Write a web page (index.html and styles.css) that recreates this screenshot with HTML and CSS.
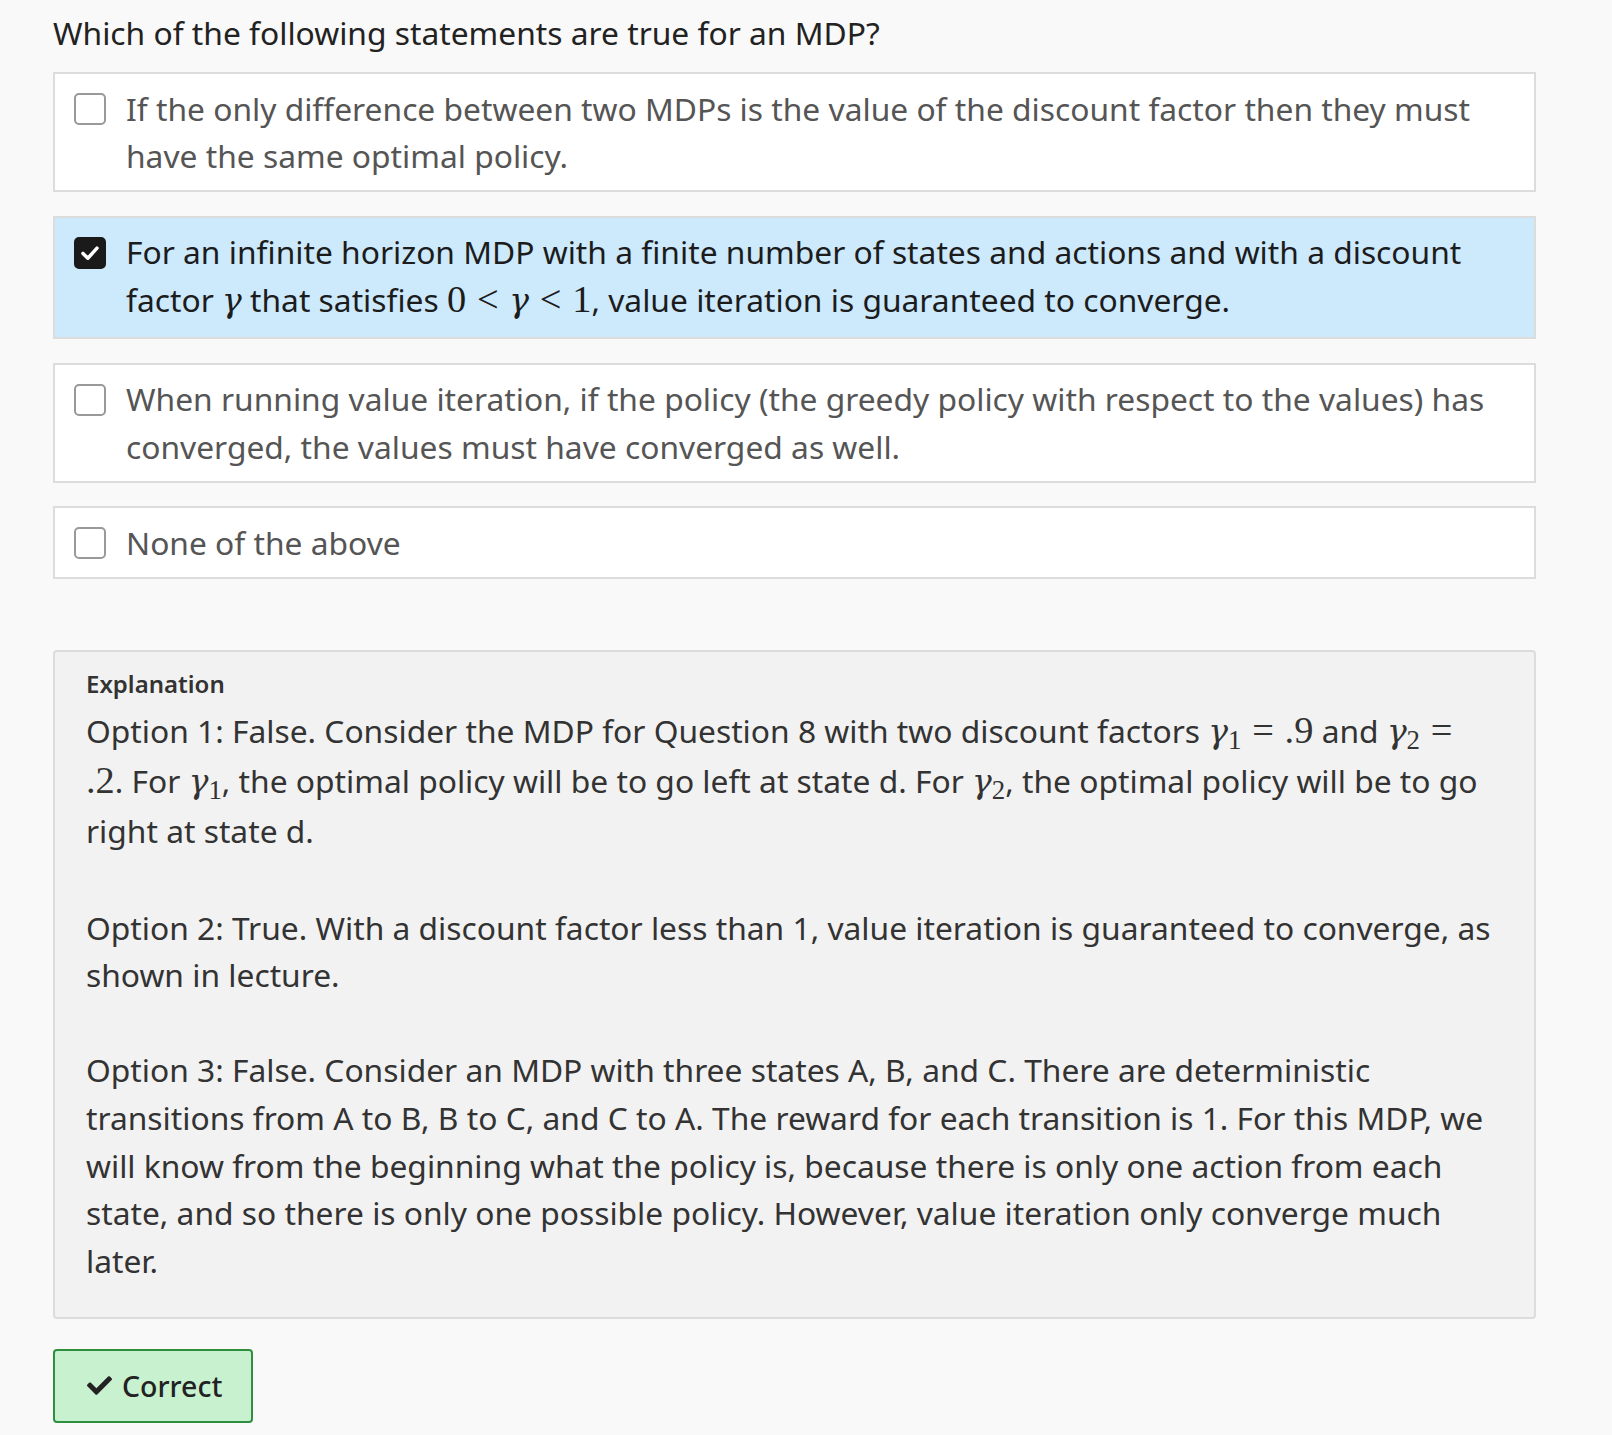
FILE: index.html
```html
<!DOCTYPE html>
<html lang="en">
<head>
<meta charset="utf-8">
<title>MDP Question</title>
<link rel="stylesheet" href="styles.css">
</head>
<body>
<div class="page">
  <div class="question">Which of the following statements are true for an MDP?</div>
  <div class="options">
    <div class="option">
      <span class="box"></span>
      <span class="label">If the only difference between two MDPs is the value of the discount factor then they must have the same optimal policy.</span>
    </div>
    <div class="option selected">
      <span class="box checked"><svg viewBox="0 0 32 32" width="32" height="32"><path d="M8 16.5 L13.5 22 L24 10.5" fill="none" stroke="#fff" stroke-width="4" stroke-linecap="round" stroke-linejoin="round"/></svg></span>
      <span class="label">For an infinite horizon MDP with a finite number of states and actions and with a discount factor <span class="m"><i>γ</i></span> that satisfies <span class="m">0<span class="op">&lt;</span><i>γ</i><span class="op">&lt;</span>1</span>, value iteration is guaranteed to converge.</span>
    </div>
    <div class="option">
      <span class="box"></span>
      <span class="label">When running value iteration, if the policy (the greedy policy with respect to the values) has converged, the values must have converged as well.</span>
    </div>
    <div class="option">
      <span class="box"></span>
      <span class="label">None of the above</span>
    </div>
  </div>

  <div class="explanation">
    <div class="exp-title">Explanation</div>
    <p class="tall">Option 1: False. Consider the MDP for Question 8 with two discount factors <span class="m"><i>γ</i><sub>1</sub><span class="op">=</span>.9</span> and <span class="m"><i>γ</i><sub>2</sub><span class="op">=</span></span> <span class="m">.2</span>. For <span class="m"><i>γ</i><sub>1</sub></span>, the optimal policy will be to go left at state d. For <span class="m"><i>γ</i><sub>2</sub></span>, the optimal policy will be to go right at state d.</p>
    <p>Option 2: True. With a discount factor less than 1, value iteration is guaranteed to converge, as shown in lecture.</p>
    <p>Option 3: False. Consider an MDP with three states A, B, and C. There are deterministic transitions from A to B, B to C, and C to A. The reward for each transition is 1. For this MDP, we will know from the beginning what the policy is, because there is only one action from each state, and so there is only one possible policy. However, value iteration only converge much later.</p>
  </div>

  <div class="result">
    <span class="correct"><svg class="tick" viewBox="0 0 512 512" width="24" height="24"><path d="M173.9 439.4 7.5 273c-10-10-10-26.2 0-36.2l36.2-36.2c10-10 26.2-10 36.2 0L192 312.7 432.1 72.6c10-10 26.2-10 36.2 0l36.2 36.2c10 10 10 26.2 0 36.2L210.1 439.4c-10 10-26.2 10-36.2 0z" fill="#222"/></svg>Correct</span>
  </div>
</div>
</body>
</html>
```

FILE: styles.css
```css
html, body {
  margin: 0;
  padding: 0;
  background: #f9f9f9;
}
.page {
  width: 1483px;
  margin-left: 53px;
  padding-top: 11px;
  font-family: "Noto Sans", "Open Sans", sans-serif;
}
.question {
  font-size: 31.75px;
  line-height: 44px;
  color: #222;
  margin-bottom: 17px;
}
.options {
  display: flex;
  flex-direction: column;
  gap: 23.5px;
}
.option {
  display: flex;
  align-items: flex-start;
  gap: 20px;
  background: #fff;
  border: 2px solid #dcdcdc;
  padding: 10.5px 20px 10.5px 19px;
  font-size: 31.75px;
  line-height: 1.5;
  color: #555;
}
.option.selected {
  background: #cde9fc;
  color: #1c1c1c;
  padding-bottom: 13.5px;
}
.box {
  flex: none;
  width: 28px;
  height: 28px;
  margin-top: 8.5px;
  border: 2px solid #999;
  border-radius: 5px;
  background: #fff;
  display: flex;
  align-items: center;
  justify-content: center;
}
.box.checked {
  background: #1a1a1a;
  border-color: #1a1a1a;
}
.box svg {
  width: 30px;
  height: 30px;
}
.m {
  font-family: "Liberation Serif", "DejaVu Serif", serif;
  font-size: 1.21em;
  line-height: 1;
  white-space: nowrap;
}
.m i {
  font-family: "DejaVu Serif", "Liberation Serif", serif;
  font-size: 0.86em;
  font-style: italic;
}
.m sub {
  font-style: normal;
  font-size: 0.7em;
  line-height: 0;
  vertical-align: -0.22em;
}
.op {
  padding: 0 0.28em;
}
.explanation {
  margin-top: 71px;
  background: #f2f2f2;
  border: 2px solid #dcdcdc;
  border-radius: 4px;
  padding: 14px 30px 32px 31px;
  color: #333;
}
.exp-title {
  font-size: 24px;
  font-weight: 600;
  line-height: 36px;
  margin-bottom: 4px;
  color: #333;
}
.explanation p {
  margin: 0 0 1.5em;
  font-size: 31.75px;
  line-height: 1.5;
}
.explanation p.tall {
  line-height: 50px;
}
.explanation p:last-child {
  margin-bottom: 0;
}
.result {
  margin-top: 30px;
  padding-bottom: 13px;
}
.correct {
  display: inline-flex;
  align-items: center;
  gap: 10px;
  width: 164px;
  height: 70px;
  padding-left: 32px;
  justify-content: flex-start;
  background: #c8f1d0;
  border: 2px solid #2f8f3f;
  border-radius: 4px;
  font-size: 28.5px;
  font-weight: 500;
  color: #222;
}
.tick {
  width: 25px;
  height: 25px;
}
```
